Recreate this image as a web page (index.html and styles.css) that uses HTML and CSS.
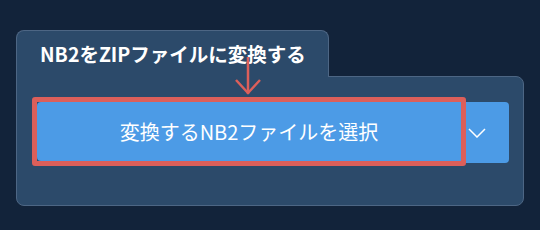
FILE: index.html
```html
<!DOCTYPE html>
<html lang="ja">
<head>
<meta charset="utf-8">
<link rel="stylesheet" href="styles.css">
</head>
<body>
<div class="widget">
  <div class="tab">NB2をZIPファイルに変換する</div>
  <div class="panel">
    <div class="btn-row">
      <button class="btn-main">変換するNB2ファイルを選択<span class="highlight"></span></button>
      <button class="btn-drop" aria-label="その他">
        <svg width="18" height="10" viewBox="0 0 18 10"><polyline points="1,1 9,9 17,1" fill="none" stroke="#ffffff" stroke-width="1.5"/></svg>
      </button>
    </div>
  </div>
  <svg class="arrow" width="30" height="40" viewBox="0 0 30 40"><line x1="15" y1="0" x2="15" y2="37" stroke="#dc5f5a" stroke-width="2.5"/><polyline points="3,23 15,36 27,23" fill="none" stroke="#dc5f5a" stroke-width="2.5"/></svg>
</div>
</body>
</html>
```
FILE: styles.css
```css
html, body {
  margin: 0;
  padding: 0;
  background: #12233a;
  width: 540px;
  height: 230px;
  overflow: hidden;
}
body {
  font-family: "Noto Sans CJK JP", "Noto Sans", sans-serif;
}
.widget {
  position: relative;
  margin: 30px 0 0 16px;
  width: 508px;
}
.tab {
  position: relative;
  z-index: 1;
  display: inline-block;
  box-sizing: border-box;
  width: 313px;
  height: 47px;
  margin-bottom: -1px;
  padding: 10px 0 0 23px;
  background: #2c4a6a;
  border: 1px solid #4d6684;
  border-bottom: none;
  border-radius: 8px 8px 0 0;
  color: #ffffff;
  font-weight: 700;
  font-size: 19.5px;
  line-height: 26px;
  vertical-align: top;
}
.panel {
  box-sizing: border-box;
  height: 130px;
  background: #2c4a6a;
  border: 1px solid #4d6684;
  border-radius: 0 8px 8px 8px;
  padding: 25px 14px 0 20px;
}
.btn-row {
  display: flex;
  height: 61px;
}
.btn-main {
  position: relative;
  flex: 0 0 424px;
  height: 59px;
  border: none;
  margin: 0;
  padding: 0;
  background: #4c9be6;
  border-radius: 4px 0 0 4px;
  color: #ffffff;
  font-family: "Noto Sans CJK JP", "Noto Sans", sans-serif;
  font-size: 20px;
  font-weight: 400;
}
.highlight {
  position: absolute;
  left: -5px;
  top: -5px;
  right: -5px;
  bottom: -5px;
  border: 5px solid #dc5f5a;
  border-radius: 3px;
}
.btn-drop {
  flex: 1;
  height: 61px;
  border: none;
  margin: 0;
  padding: 0 0 0 7px;
  background: #4c9be6;
  border-radius: 0 4px 4px 0;
  display: flex;
  align-items: center;
}
.arrow {
  position: absolute;
  z-index: 2;
  left: 217px;
  top: 27px;
}
```
